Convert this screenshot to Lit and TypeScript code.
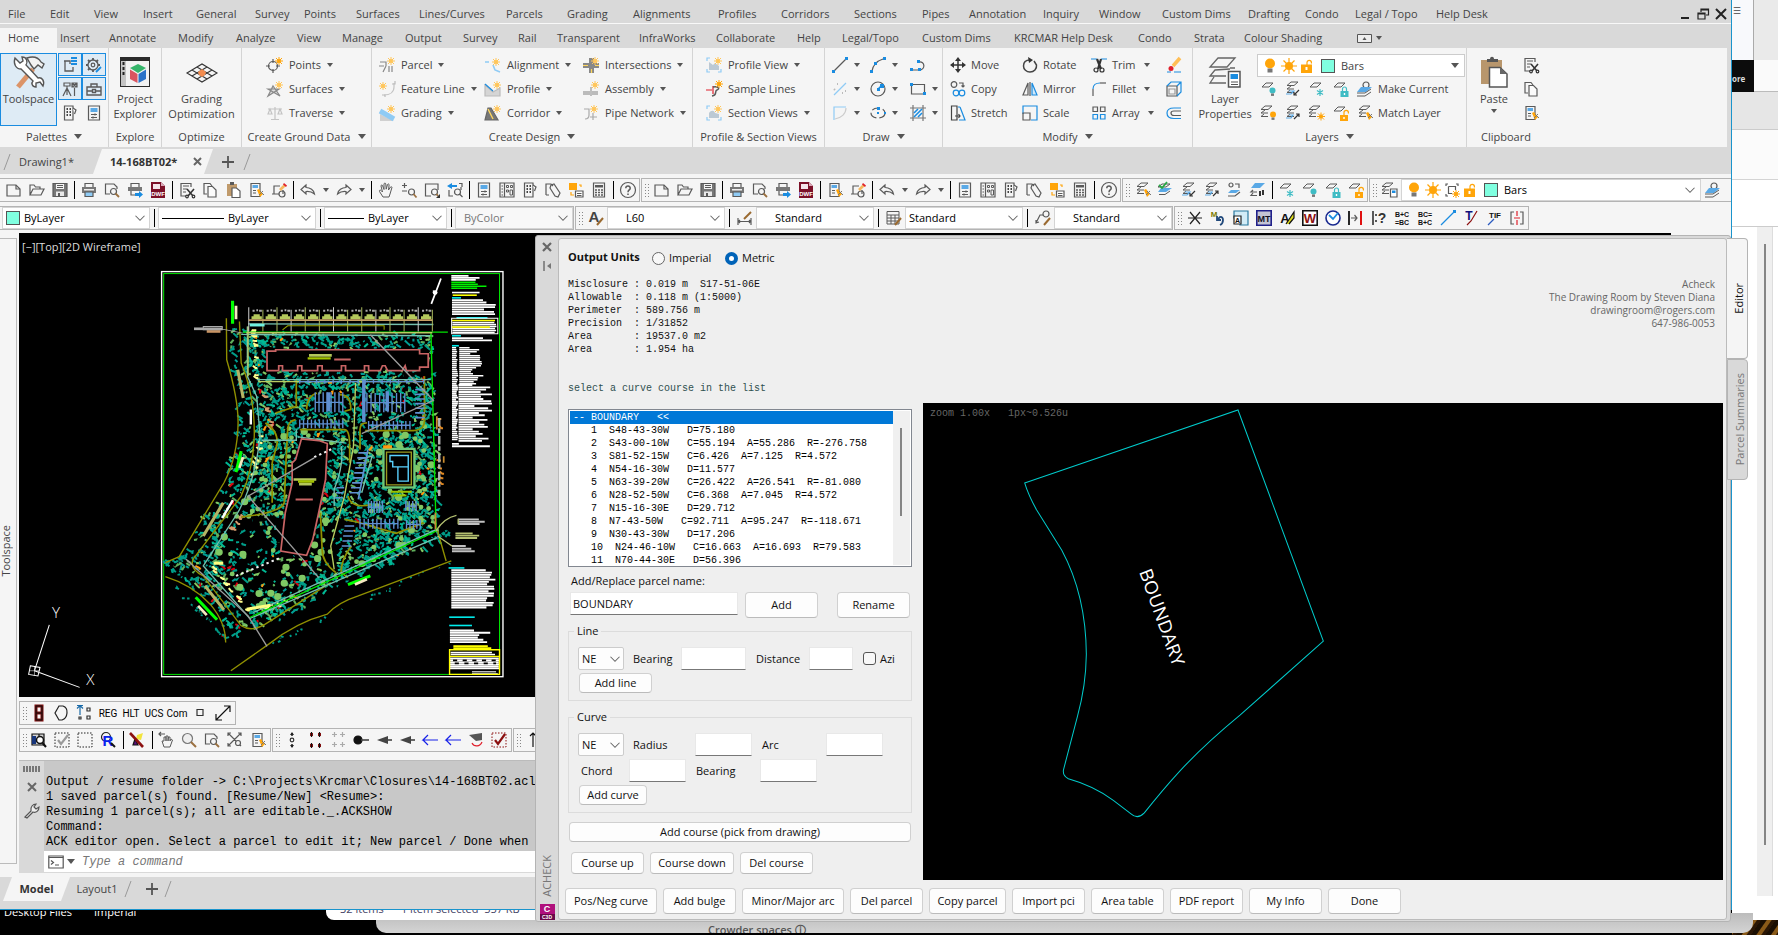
import { LitElement, html, css, svg, nothing, TemplateResult, SVGTemplateResult } from "lit";
import { customElement } from "lit/decorators.js";

const G = "#5a5a5a";
const B = "#1a8ce0";
const L = "#8fcbf5";
const O = "#ffa50a";
const R = "#e0202c";
const T = "#3fbcc4";

const p = (d: string, stroke = G, fill = "none", w = 1.2) =>
  svg`<path d=${d} stroke=${stroke} fill=${fill} stroke-width=${w}/>`;
const f = (d: string, fill = G) => svg`<path d=${d} fill=${fill}/>`;
const c = (x: number, y: number, r: number, stroke = G, fill = "none", w = 1.2) =>
  svg`<circle cx=${x} cy=${y} r=${r} stroke=${stroke} fill=${fill} stroke-width=${w}/>`;
const t = (x: number, y: number, s: string, size: number, fill: string) =>
  svg`<text x=${x} y=${y} font-size=${size} font-weight="700" text-anchor="middle" fill=${fill} font-family="Liberation Sans, sans-serif">${s}</text>`;

const star = (x: number, y: number, col = O) => svg`<g transform="translate(${x} ${y})">${[
  p("M0 -4V4M-4 0H4M-3 -3L3 3M3 -3L-3 3", col, "none", 1), c(0, 0, 2, "none", col)]}</g>`;
const pale = "#ffc65a";
const layers = (dx = 0) => [p(`M${4 + dx} 1H${11 + dx}L${7 + dx} 4.5H${dx}Z`, G, "none", 1), p(`M${4 + dx} 5L${dx} 8H${7 + dx}M${3 + dx} 9L${dx} 11.5H${7 + dx}`, G, "none", 1)];
const layer = [p("M5 2H12L8 6H1Z", G, "none", 1)];
const layersBlue = [p("M4 2H12L8 5H0Z", G, "none", 1), f("M3 6H14L8 10H0Z", "#5aa9e6"), p("M1 12.5H7L12 9", G, "none", 1)];
const bulb = (x: number, y: number, r: number, col: string) => [c(x, y, r, "none", col), f(`M${x - r / 2} ${y + r}h${r}v${r * 0.8}h${-r}Z`, "#777")];
const lock = (x: number, y: number, col: string, open = false) => [
  p(open ? `M${x + 3} ${y}v-2.5a2.2 2.2 0 0 1 4.4 0v1` : `M${x + 1} ${y}v-2a2 2 0 0 1 4 0v2`, col), f(`M${x - 1} ${y}h8v6h-8Z`, col), f(`M${x + 2.3} ${y + 2}h1.4v2h-1.4Z`, "#fff")];
const arrowUp = p("M9 14L14 9M14 12V9H11", "#333");
const arrowDn = p("M14 9L9 14M9 11V14H12", "#333");
const brush = [f("M9 8l2 -1 4 5-3 3Z", O), p("M11 13L15 9M12 9L16 13", "#777", "none", 1)];
const doc = p("M3 1.5H12V14.5H3Z");

const icons: Record<string, SVGTemplateResult | unknown[]> = {
  new: [p("M1 3H10L14 7V14H1Z"), p("M10 3V7H14")],
  open: [p("M1 13V3H5L6.5 5H11V7M1 13L4 7H15L12 13Z")],
  save: [p("M1 1.5H15V14.5H1Z", G, "#777"), f("M4 2H12V7H4Z", "#f5f5f5"), f("M4 9.5H12V14H4Z", "#e9e9e9"), f("M5 3H11V4H5ZM5 5H11V6H5ZM6 11H8V14H6Z")],
  print: [p("M4 5V1.5H12V5"), f("M1 5H15V11H1Z", "#777"), f("M3 7H13V8.5H3Z", "#eee"), p("M4 10H12V14.5H4Z", G, L)],
  preview: [p("M6 12H1.5V2H10L13 5V7"), c(9.5, 9.5, 3), p("M11.5 11.5L15 15", "#9a7040", "none", 1.8)],
  publish: [p("M4 5V1.5H12V5"), f("M1 5H15V9H1Z", "#777"), p("M4 9V13H8"), f("M8 11H12V9L16 12.5L12 16V14H8Z", B)],
  dwf: [f("M1 0H11L15 4V16H1Z", "#7c1028"), f("M3 2H10V7H3Z", "#f4e4ea"), f("M11 0V4H15Z", "#d9a8b8"), t(8, 14, "DWF", 6, "#fff")],
  cut: [p("M12 5V1.5H2V14H7M4 4H10M4 7H8M4 10H7"), p("M8 7L14 14M15 7L9 14", "#333", "none", 1.6), c(8, 14.5, 1.3, "#333"), c(14.5, 14.5, 1.3, "#333")],
  copy: [p("M5 12H2V1.5H8L10 4"), p("M6 4.5H10.5L14 8V15H6Z", G, "#fbfbfb")],
  paste: [f("M2 2H12V14H2Z", "#c09a6b"), f("M5 0H9V3H5Z"), p("M7 6H11.5L15 9V15.5H7Z", G, "#fff")],
  match: [doc, f("M4.5 3H10V6H4.5Z", "#5aa9e6"), p("M5 8.5H8M5 11H8"), brush],
  block: [p("M9 4H3V12H1M3 12H8M12 8V12"), c(11, 12, 3), p("M9 8L14 3", "#f5b860", "none", 2.6), f("M13 1L16 3.5L15 5L12 2.5Z", R)],
  undo: [p("M6 3L1 7.5L6 12V9.5C10 9 12 10 14.5 12C14 8 10 5.5 6 5.5Z")],
  redo: [p("M10 3L15 7.5L10 12V9.5C6 9 4 10 1.5 12C2 8 6 5.5 10 5.5Z")],
  pan: [p("M5 15L1.5 9.5C1 8 2.5 7.5 3.5 9L4.5 10L3 4C3 2.7 4.3 2.6 4.7 4L6 7.5L6 2C6.2 .8 7.600 .8 7.8 2L8.2 7.2L9.5 2.5C10 1.5 11.2 1.8 11.1 3L10.5 8L12.5 5C13.5 4.3 14.3 5 13.8 6L12 12L11 15Z", G, "none", 1)],
  zoompm: [p("M1 3.500H6M3.500 1V6M1 9H6"), c(10.5, 10, 3), p("M12.500 12L15.500 15.500", "#9a7040", "none", 1.8)],
  zoomwin: [p("M7 14H1.5V2H14V8"), c(10.5, 10, 3), p("M12.5 12L14 14", "#9a7040", "none", 1.8), f("M16 12V16H12Z", "#333")],
  zoomprev: [p("M2 8V14H6M14 8V5", G), f("M5 1L0 4L5 7V5H10V3H5Z", B), c(10.5, 10, 3), p("M12.5 12L15.5 15M12 1.5H15V5", G)],
  props: [p("M2.5 1H13.5V15H2.5Z"), f("M4.5 3H11.5V7H4.5Z", "#5aa9e6"), p("M5 9.5H11M5 12.5H11M9 8.5V10.5M7 11.5V13.5")],
  dc: [p("M1 1H15V15H1ZM5.5 1V15"), p("M2.5 4H4M2.5 7H4M2.5 10H4M2.5 13H4"), p("M7.5 3.5h2v2h-2ZM11.5 3.5h2v2h-2ZM7.5 8h2v2h-2ZM11 8h2.5v5H11Z", G, "none", 1)],
  toolp: [p("M2.5 1H11V15H2.5Z"), p("M4.500 4h1.5M7.500 4h1.5M4.500 7h1.5M7.500 7h1.5M4.500 10h1.5M7.500 10h1.5", "#444", "none", 1.8), p("M11 3L14 5L12.500 9", G, "#fff")],
  sheet: [p("M1 13V2H6L8 4M1 13H4"), p("M6 3L9 2L15 11L13 15L10 14L5 6Z")],
  markup: [f("M1 1H9V8H1Z", O), p("M11 3H13V5M3 10V13H6", O), p("M7.5 9H15V15H7.5ZM9 11.5H13.5M9 13.5H13.5", G, "#fff")],
  calc: [p("M2.5 1H13.5V15H2.5Z"), f("M4 3H12V5.5H4Z"), p("M4 8H12M4 10.5H12M4 13H12", G, "none", 1.6), p("M6.5 7V14M9.5 7V14", "#f5f5f5", "none", 1)],
  help: [c(8, 8, 7.500), p("M5.8 6.3C5.8 3.3 10.3 3.4 10.2 6.2C10.2 8 8 7.8 8 10.2M8 11.5V13", G, "none", 1.5)],
  layMatch: [layers(2), brush],
  layCheck: [layersBlue, p("M1 3L4 6L9 0", "#27a844", "none", 1.8)],
  layPrev: [layers(2), p("M4 10H9L6 13H1", "#5aa9e6"), arrowDn],
  layUp: [layers(2), p("M4 10H8L6 13H1", "#5aa9e6"), arrowUp],
  layIso: [c(4, 3, 2), p("M8 2H12V6"), f("M4 8H13L9 11H1Z", "#5aa9e6"), p("M1 14H8L13 10")],
  layWalk: [f("M5 1H15L10 6H1Z", "#5aa9e6"), p("M3 8L1 10H7M3 11L1 13.5H7"), f("M9 9h2v5H9ZM12 8h2v5h-2Z", "#333")],
  layFreeze: [layer, p("M11 8V15M8 9.5L14 13.5M14 9.5L8 13.5", T)],
  layOff: [layer, bulb(11.5, 9.5, 3, T)],
  layLock: [layer, lock(8.5, 10, T)],
  layUnlock: [layer, lock(8, 10, O, true)],
  layBulb: [layers(), bulb(12, 9.5, 3, O)],
  laySun: [layers(), star(12, 11.5)],
  layCur: [c(9, 4, 3), f("M4 6H15L9 11H0Z", "#5aa9e6"), p("M0 12H8L14 8M0 15H8L14 11", G, "none", 1)],
  layMgr: [layers(), p("M8.5 7H15V15H8.5Z", G, "#fff"), f("M10 8.5H13.5V11H10Z", B)],
  bulb: bulb(8, 5.5, 5, O), sun: [c(8, 8, 4, "none", O), p("M8 0V16M0 8H16M2.5 2.5L13.5 13.5M13.5 2.5L2.5 13.5", O)],
  vpsun: [p("M4 2H2V4M12 2H14V4M4 14H2V12M4.5 4.5H11.5V8M4.5 4.5V11.5H8"), star(12, 12)],
  unlock: [lock(4, 7, O, true), f("M1 6.5H12V15H1Z", O), f("M5.5 9H7.5V12H5.5Z", "#fff")],
  text: [t(6, 12, "A", 15, "#444"), p("M9 15L15 8", "#9a6a30", "none", 2)],
  dim: [p("M1 8V15M14 8V15M2 11.5H13M3 10L1.5 11.5L3 13M12 10L13.500 11.500L12 13"), p("M7 9L14 2", "#9a6a30", "none", 2)],
  tbl: [p("M1 1.5H13V14H1ZM1 5H13M1 8H13M1 11H13M5 5V14M9 5V14", G, "none", 1), p("M9 15L15 8", "#9a6a30", "none", 2)],
  mlead: [c(11, 4, 3), p("M1 13L5 5H8M1 10V13L4 12"), p("M9 15L15 8", "#9a6a30", "none", 2)],
  a1: [p("M1 8H15M3 2L13 14M13 2L3 14", "#222", "none", 1.2)],
  a2: [t(4, 7, "M", 8, "#7a7a00"), p("M7 10L10 7C14 6 14 13 10 15M7 6V10H11", "#224a7c", "none", 1.800)],
  a3: [p("M1 1H15V15H7V8H1Z", "#2a7aa0", "#d2ecf7"), p("M1 6H8V14H1Z", "#222", "#fff"), t(4.5, 13, "A", 7, "#111")],
  a4: [p("M.8 .8H15.2V15.2H.8Z", "#20208a", "#c4c4d4", 1.6), t(8, 12, "MT", 9, "#112")],
  a5: [t(6, 13, "A", 13, "#111"), p("M7 14L15 2V8L10 14", "#111", "#dddc20")],
  a6: [p("M.8 .8H15.2V15.2H.8Z", "#111", "#fff", 1.6), t(8, 13, "W", 13, "#8c1010")],
  a7: [c(8, 8, 7, "#1a2a90", "#fff", 1.6), p("M4 5L8 9L13 3", "#1a8ce0", "none", 1.8)],
  a8: [p("M1 1V15", "#111", "none", 1.8), p("M3 8H9M6.5 5L9 8L6.5 11"), p("M13 1V15", "#e01010", "none", 2)],
  a9: [p("M2 1V15M5 4V6M5 10V12", "#333", "none", 1.6), t(11, 13, "?", 14, "#333")],
  a10: [t(8, 7, "B+C", 7, "#111"), t(8, 15, "=BC", 7, "#111")],
  a11: [t(8, 7, "BC=", 7, "#111"), t(8, 15, "B+C", 7, "#111")],
  a12: [p("M1 15L15 1", B), f("M13 0H16V3H13Z", B)],
  a13: [t(6, 10, "T", 12, "#10107a"), p("M4 15L8 11L14 1", "#8c1010")],
  a14: [t(9, 8, "TIF", 8, "#111"), p("M2 15L8 9", "#2a5ac0")],
  a15: [p("M5 2H2V14H5M11 2H14V14H11"), p("M8 1V6M8 10V15M5 8H11", R)],
  move: [p("M8 2V14M2 8H14", "#333", "none", 1.5), f("M8 0L11 4H5ZM8 16L11 12H5ZM0 8L4 5V11ZM16 8L12 5V11Z", "#333")],
  copyobj: [c(4, 3.5, 2.8), p("M9 2H13V6M11.5 4.5L13 6L14.5 4.5"), c(6, 12, 2.8, B), c(12, 12, 2.8, B)],
  stretch: [p("M1.5 1H7V15H1.5ZM5 11H10M8.5 9L10 11L8.5 13", "#444"), p("M10 2L15 15H9M8 2H10", B)],
  rotate: [p("M8 3C3 3 1.5 6 1.5 9C1.5 12.5 4.5 15 8 15C12 15 15 12 14.5 8L12 4", "#444", "none", 1.5), f("M6 0L11 3L7 6Z", "#333")],
  mirror: [p("M6 2L1 14H6Z"), p("M8 1V15", "#333", "none", 1), p("M10 2L15 14H10Z", B, "#cfe8fb")],
  scale: [p("M1 9V1H15V15H9", B), p("M1 8H8V15H1Z", G)],
  trim: [p("M0 2H6M10 2H16", B, "none", 1.2), p("M6 2L10 12M10 2L7 12", "#333", "none", 2.2), c(5, 13, 2, "#333"), c(11, 13, 2, "#333")],
  fillet: [p("M2 15V8"), p("M2 8C2 4 5 2 9 2", B), p("M9 2H15")],
  array: [p("M2 2h4.5v4.5H2ZM9.5 2H14v4.5H9.5Z", G), p("M2 9.5h4.5V14H2ZM9.5 9.5H14V14H9.5Z", B)],
  erase: [p("M14 1L7 9", "#ffbe55", "none", 3.5), c(5, 11.500, 2.5, "none", R), p("M1 15H5M8 15H15", B)],
  explode: [p("M1 5H11V15H1Z", G), p("M3 8H9V13H3Z", "#999"), p("M1 5L5 1H15V11L11 15M15 1L11 5", B)],
  offset: [p("M15 3H8C3 3 1 5 1 8C1 11 3 13.5 8 13.5H15", B), p("M15 6H8C5.5 6 5 7 5 8C5 9.5 6 10.5 8 10.5H15", G)],
  line: [p("M2 14L14 2"), f("M0 13h3v3H0ZM13 0h3v3h-3Z", B)],
  pline: [p("M2 14C3 8 7 4 13 2", G, "none", 1.2), f("M0 13h3v3H0ZM13 0h3v3h-3ZM4 5h3v3H4Z", B)],
  arc: [p("M1 13H9C16 13 15 4 9 5"), f("M0 11h3v3H0ZM8 11h3v3H8ZM7 3h3v3H7Z", B)],
  hatchl: [p("M2 14L14 2", L), p("M2 8L3 9M10 12H11M5 3H6M13 10H14", "#bbb", "none", 2)],
  circle: [c(8, 8, 7), p("M8 8L12 4", B), f("M7 7h3v3H7ZM10 3h4v4h-4Z", B)],
  rect: [p("M1.5 3.5H14.5V13H1.5Z"), f("M0 2h3v3H0ZM13 11h3v3h-3Z", B)],
  arcpale: [p("M2 15V2H14", L, "none", 1.2), p("M3 14C9 13 14 9 14 3", "#ccc")],
  ellipse: [svg`<ellipse cx="8" cy="8" rx="7" ry="5" fill="none" stroke=${G} stroke-width="1.2" stroke-dasharray="8 3"/>`, f("M7 2h3v3H7ZM7 7h2v2H7ZM14 7h2v2h-2Z", B)],
  hatch: [p("M3 0V16M13 0V16M0 3H16M0 13H16", "#777"), p("M4 8L8 4M4 12L12 4M8 12L12 8", B, "none", 1.6)],
  points: [c(6, 9, 4.5), p("M6 2V6M6 12V16M-1 9H3M9 9H13"), star(12, 4)],
  surf: [p("M1 15L6 5L13 15L1 8H12Z", "#888", "#ddd"), star(12, 4, pale)],
  trav: [p("M8 2V14M4 14.5H12M1 4H15M3 4L1 9H5ZM13 4L11 9H15Z", "#c4c4c4")],
  parcel: [p("M1 5H7V9M0 9H5M7 9L4 15M10 9V15M13 9V15", "#888"), star(12, 4, pale)],
  fline: [p("M15 2V6C15 11 11 14 5 14", "#c4c4c4"), p("M13 3H16V0M3 14H6V16", "#bbb"), star(4, 5, pale)],
  grade: [f("M1 9L15 16H1Z", "#d0d0d0"), p("M1 6L15 14", L, "none", 5), star(12, 4, pale)],
  align: [p("M0 5H4M8 8L10 13L15 15", L, "none", 1.6), star(11, 5, pale)],
  profile: [p("M0 4L8 11L15 7V15H0Z", "#bbb", "#d5d5d5"), p("M0 3L8 10", B), star(12, 4, pale)],
  corridor: [p("M0 15L3 3H6L13 15Z", "#666", "#777"), p("M3 4L8 14", "#ffd75e", "none", 1.4), star(12, 4, pale)],
  inters: [f("M0 6H16V11H0ZM6 1H11V16H6Z", "#888"), p("M0 8.5H5M12 8.5H16M8.5 12V16", "#ffd75e"), star(12, 4, pale)],
  assem: [f("M0 10H7V14H0ZM9 10H15V14H9Z", "#bbb"), p("M8 6V15", "#999"), star(12, 4, pale)],
  pipe: [p("M1 4H6V10C6 14 3 14 2 14M10 8V15M7 12H14", "#aaa"), star(11, 4, pale)],
  pview: [p("M4 1H1V4M1 12V15H4M12 15H15V12", L), f("M3 5L7 8L9 6L13 9V13H3Z", "#bcc9d4"), star(12, 4, pale)],
  sample: [p("M0 9H6M7 5V13", R), p("M7 6C13 5 14 8 11 9C8 10 12 14 6 15", G, "none", 1.5), star(13, 3)],
  sview: [p("M4 1H1V4M1 12V15H4M12 15H15V12", L), f("M3 13V8C5 5 8 5 9 8L13 9V13Z", "#bcc9d4"), star(12, 4, pale)],
  tsA: [p("M2 4H8V7M3 4V14H11V10", G, "none", 1.3), f("M9 0h6v2H9ZM9 3h6v2H9ZM9 6h6v2H9Z", B)],
  tsB: [c(7, 8, 5, G, "none", 1.3), c(7, 8, 1.8), p("M7 1V3M7 13V15M0 8H2M12 8H14M2 3L4 5M12 3L10 5M2 13L4 11", G, "none", 1.8), p("M10 15L15 10", B, "none", 1.8)],
  tsC: [p("M2 2H8V5H2ZM5 5V14M5 7L1 15M5 7L9 15M10 2L15 6M15 2L10 6M10 2H15V6H10Z"), p("M12.5 7V15")],
  tsD: [p("M1 6H15V14H1ZM5 6V3H11V6M1 10H6M10 10H15M6.5 8.5H9.5V11.5H6.5Z", G, "none", 1.4)],
  bb: [p("M5 1H11V15H5ZM5 8H11", "#7a0e0e", "none", 3), p("M5 1H11V15H5ZM5 8H11", "#111", "none", 1)],
  hex: [p("M5 1L1 8L5 15H8C14 13 15 3 9 1Z", "#222")],
  grp: [p("M3 1V10M0 3.500L3 .500L6 3.500M0 .500H6", "#1a6aa8"), p("M10 3h3v3h-3ZM10 11h3v3h-3ZM2 12h2v2H2Z", "#333")],
  sq: [p("M5 4.5h6v6H5Z", "#333")],
  diag: [p("M1 15L15 1M9 1H15V7M1 9V15H7", "#111")],
  lens: [p("M1 2H13V13H1ZM1 2H8V6", "#111", "#d4d4d4"), f("M1 4H5V12H1Z", "#17357c"), c(9, 8, 3.5, "#111", "#fff", 1.5), p("M11.5 11L15 15", "#111", "none", 2)],
  chk: [svg`<rect x="1" y="1" width="14" height="14" fill="none" stroke="#222" stroke-dasharray="1.5 1.5"/>`, p("M4 8L7 12L14 3", "#999", "none", 2.2)],
  dash: [svg`<rect x="1" y="1" width="14" height="14" fill="none" stroke="#222" stroke-dasharray="1.5 1.5"/>`],
  rr: [c(6, 5, 4.5, "#222"), t(8, 14, "R", 15, "#0a22ee"), p("M11 11L15 15", "#111", "none", 2)],
  noflag: [p("M6 7L4 13H9Z", "#111", "#5a107a"), f("M8 3L14 1L12 8L7 7Z", "#f2e43c"), p("M1 1L14 15", "#8c1010", "none", 2.6)],
  hand2: [p("M3 0L1 2L3 4M1 2H7"), p("M6 15L4 9L6 9V5L8 5V9V4H10V9L10.5 5H12V9L13 7L14.5 8L12 15Z", G, "none", 1)],
  mag: [c(6.5, 6.5, 5, "#777", "#eee"), p("M10 10L15 15", "#9a7040", "none", 2)],
  ext: [p("M1 1L14 14M14 1L1 14M1 4V1H4M11 1H14V4M1 11V14H4"), c(11, 11, 2.5, G, "#f5f5f5")],
  v1: [p("M8 1V4M8 12V15", "#222", "none", 1.5), f("M8 0L10 3H6ZM8 16L10 13H6Z", "#222"), c(8, 8, 1.8, "#333")],
  v2: [p("M4.500 0V5M12.500 0V5M4.500 11V16M12.500 11V16", "#111"), f("M3 1h3v3H3ZM11 1h3v3h-3ZM3 12h3v3H3ZM11 12h3v3h-3Z", "#8c1010"), p("M4.500 1V4M12.500 1V4M4.500 12V15M12.500 12V15", "#111")],
  v3: [p("M4.5 0V5M12.5 0V5M4.5 10V15M12.5 10V15M2 2.5H7M10 2.5H15M2 12.5H7M10 12.5H15", "#aaa")],
  v4: [c(5, 8, 4, "#111", "#111"), p("M8 8H16", "#444", "none", 1.6)],
  v5: [f("M1 8L12 4V12Z", "#444"), p("M12 8H16", "#444", "none", 1.6)],
  v6: [p("M16 8H1L6 3M1 8L6 13", "#1822e8", "none", 1.2)],
  v7: [f("M1 3L14 1V8L8 9Z", "#555"), p("M4 11C6 15 12 15 14 10", R)],
  v8: [svg`<rect x="1" y="1" width="14" height="14" fill="none" stroke="#8c1010" stroke-dasharray="1.5 1.5"/>`, p("M4 8L7 12L14 2", "#8c1010", "none", 2.2)],
  up: [p("M8 15V1M5 4L8 1L11 4", "#111")],
  chev: [p("M2 5L8 11L14 5", "#666", "none", 1.400)],
  wrench: [p("M1 15L7 9C6 5 9 2 12 2L10 5L12 7L15 5C15 9 12 11 9 10L3 16Z", "#555", "#eee")],
  prompt: [p("M.8 2H15.2V14H.8Z", "#555", "#fff"), p("M.8 3.5H15.2M3 6.5L5.5 8.5L3 10.5M7 11H11", "#555")],
};

const bigIcons: Record<string, unknown> = {
  tools: [p("M5 31L20 13", "#dc9468", "none", 5), p("M14 2C20 0 25 1 28 6L31 8L29 12L25 9L21 13L18 9Z", "#555", "#f2f2f2", 1.4), p("M2 2L7 7L10 5L9 1C14 1 15 6 13 9L25 22C29 21 32 25 30 30L27 26L23 27L23 31C19 31 18 27 20 25L8 13C3 13 0 8 2 2Z", "#555", "#fff", 1.4)],
  explorer: [f("M1 1H31V31H1Z", "#2b2b2b"), f("M7 5H30V30H7Z", "#f2f2f2"), f("M2 5H7V30H2Z", "#c4c4c4"), p("M4.5 6V9M4.5 11V14M4.5 16V19", "#222", "none", 2), f("M19 8L27 12L19 17L11 12Z", "#35b56a"), f("M11 13.5L18.5 18V27L11 23Z", "#d95560"), f("M27 13.5L19.5 18V27L27 23Z", "#2a72c8")],
  grading: [p("M1 17L16 8L31 17L16 26ZM6 14L21 23M11 11L26 20M26 14L11 23M21 11L6 20", "#333", "none", 1.1), f("M12 16L16 13L20 16L19 19L16 21L13 19Z", "#f28c50")],
  layerp: [p("M9 2H26L18 11H1ZM26 12H21M21 13L6 14L1 20H17M5 21L1 27H17", "#666", "none", 1.3), p("M19.5 15.5H31V31H19.5Z", "#555", "#fff", 1.5), f("M21.5 18H29V23H21.5Z", B), p("M22 26H29M22 28.5H29", "#555")],
  paste: [f("M3 4H24V28H3Z", "#b8966c"), f("M9 3H12C12 0 16 0 16 3H20V6H9Z", "#555"), p("M11.5 11.5H22L29 18V31H11.5Z", "#555", "#fff", 1.5), f("M22 12V18H29Z", "#666")],
};

const ico = (name: string, cls = "i16") => html`<svg class=${cls} viewBox="0 0 16 16" aria-hidden="true">${icons[name]}</svg>`;
const big = (name: string) => html`<svg class="i32" viewBox="0 0 32 32" aria-hidden="true">${bigIcons[name]}</svg>`;

/* Small seeded generator so the site plan keeps the same planting on every render. */
function seeded(seed: number) {
  let s = seed;
  return () => ((s = (s * 16807) % 2147483647) / 2147483647);
}
type Pt = [number, number];
function inside(x: number, y: number, poly: Pt[]) {
  let hit = false;
  for (let i = 0, j = poly.length - 1; i < poly.length; j = i++) {
    const [xi, yi] = poly[i], [xj, yj] = poly[j];
    if (yi > y !== yj > y && x < ((xj - xi) * (y - yi)) / (yj - yi) + xi) hit = !hit;
  }
  return hit;
}
const box = (x0: number, y0: number, x1: number, y1: number): Pt[] => [[x0, y0], [x1, y0], [x1, y1], [x0, y1]];
const site: Pt[] = [[700, 310], [1255, 315], [1270, 905], [730, 1160], [590, 1010], [700, 820], [745, 680], [745, 470]];
const westRoad: Pt[] = [[657, 290], [745, 310], [760, 560], [745, 740], [590, 1010], [640, 1080], [700, 1150], [740, 1180], [660, 1240], [640, 1140], [480, 1010], [530, 985], [650, 760], [690, 640], [690, 520]];
const southStrip: Pt[] = [[730, 1130], [1268, 880], [1275, 935], [1000, 1060], [760, 1200], [700, 1180]];
const keepClear: Pt[][] = [box(770, 356, 1246, 426), [[870, 624], [956, 638], [895, 984], [810, 970]], box(1115, 660, 1202, 775)];
const paved: Pt[][] = [box(915, 485, 1000, 548), box(1062, 485, 1190, 552), box(870, 566, 1000, 600), box(1066, 570, 1200, 604), [[1035, 660], [1068, 660], [1040, 815], [1012, 815]], box(990, 880, 1030, 960), box(1045, 862, 1160, 905)];

function planting() {
  const rnd = seeded(4711);
  const lanes: Record<string, string> = {};
  const add = (col: string, d: string) => { lanes[col] = (lanes[col] || "") + d; };
  const greens = ["#009c88", "#009c88", "#009c94", "#00a08c", "#00a08c", "#00b894", "#5fae5c", "#80c864"];
  for (let i = 0; i < 6200; i++) {
    const x = 470 + rnd() * 830, y = 280 + rnd() * 970, k = rnd(), a = rnd() - 0.5, b = rnd() - 0.5;
    const hue = greens[Math.floor(rnd() * greens.length)];
    const inSite = inside(x, y, site), inRoad = inside(x, y, westRoad), inSouth = inside(x, y, southStrip);
    if (!inSite && !inSouth && !(inRoad && k < 0.6)) continue;
    if (keepClear.some((q) => inside(x, y, q))) continue;
    if (paved.some((q) => inside(x, y, q)) && k > 0.25) continue;
    if (y > 860 && x > 640 && x < 985 && inSite && !inSouth && k > 0.28) continue;
    let col = hue;
    if (k < 0.01) col = "#d80010";
    else if (k < 0.016) col = "#ff9a10";
    add(col, `M${x.toFixed(0)} ${y.toFixed(0)}l${(a * 26).toFixed(0)} ${(b * 24 + 1).toFixed(0)}l${(b * 12).toFixed(0)} ${(a * 10).toFixed(0)}`);
  }
  const rim: Pt[][] = [[[480, 1000], [545, 985]], [[780, 1245], [1310, 995]], [[480, 1040], [655, 1230]], [[1250, 930], [1310, 905]]];
  for (const [[x0, y0], [x1, y1]] of rim) for (let i = 0; i < 26; i++) {
    const q = rnd(), x = x0 + (x1 - x0) * q, y = y0 + (y1 - y0) * q + (rnd() - 0.5) * 14;
    add("#009c88", `M${x.toFixed(0)} ${y.toFixed(0)}l${(rnd() * 16 - 8).toFixed(0)} ${(rnd() * 9 - 4).toFixed(0)}`);
  }
  const spots: [string, number, Pt, Pt][] = [["#ffff90", 12, [725, 290], [735, 440]], ["#ffff90", 10, [600, 1000], [720, 1150]], ["#d29a6e", 9, [755, 480], [775, 590]], ["#d29a6e", 8, [660, 900], [700, 840]], ["#ffff90", 9, [720, 760], [748, 620]], ["#e08820", 7, [1262, 500], [1270, 880]], ["#ffff90", 8, [740, 1140], [830, 1110]]];
  for (const [col, n, [x0, y0], [x1, y1]] of spots) for (let i = 0; i < n; i++) {
    const q = rnd();
    add(col, `M${(x0 + (x1 - x0) * q + rnd() * 10).toFixed(0)} ${(y0 + (y1 - y0) * q).toFixed(0)}l8 ${(rnd() * 12 - 2).toFixed(0)}h5`);
  }
  let trees = "", large = "";
  for (let i = 0; i < 420; i++) {
    const x = 600 + rnd() * 660, y = 560 + rnd() * 580, k = rnd();
    if (!inside(x, y, site) || [...keepClear, ...paved].some((q) => inside(x, y, q))) continue;
    const west = y > 600 && x < 985, east = x > 1090 || y > 900;
    if (!west && !east && k > 0.2) continue;
    if (k > 0.5) continue;
    if (k > 0.3) large += `M${x.toFixed(0)} ${y.toFixed(0)}h.1`; else trees += `M${x.toFixed(0)} ${y.toFixed(0)}h.1`;
  }
  return [
    Object.entries(lanes).map(([col, d]) => svg`<path d=${d} stroke=${col} stroke-width="6" fill="none"/>`),
    svg`<path d=${trees} stroke="#80c864" stroke-width="14" stroke-linecap="round"/><path d=${large} stroke="#80c864" stroke-width="21" stroke-linecap="round"/>`,
  ];
}

function bars(x: number, y0: number, y1: number, step: number, min: number, max: number, col: string, seed: number) {
  const rnd = seeded(seed);
  let d = "";
  for (let y = y0; y <= y1; y += step) d += `M${x} ${y}h${(min + rnd() * (max - min)).toFixed(0)}`;
  return svg`<path d=${d} stroke=${col} stroke-width=${Math.min(step * 0.8, 6)} fill="none"/>`;
}

const stalls = (x: number, y: number, w: number, h: number, n = 10) => {
  let d = "";
  for (let i = 0; i <= n; i++) d += `M${(x + (w * i) / n).toFixed(0)} ${y}v${h}`;
  return svg`<path d=${d + `M${x} ${y + h / 2}h${w}`} stroke="#5f8fd0" stroke-width="4" fill="none"/>`;
};

const sitePlan = html`<svg class="plan" viewBox="55 9 1498 1395" preserveAspectRatio="none" role="img" aria-label="Site plan">
  <g fill="none" stroke-width="3">
    <rect x="469" y="125" width="991" height="1218" stroke="#fff" stroke-width="4"/>
    <rect x="475" y="131" width="975" height="1205" stroke="#00e400"/>
    ${planting()}
    <path d="M657 265L658 390Q692 510 691 580Q690 680 650 760L520 982L480 1000M695 275L700 400Q740 500 738 620Q735 720 700 800L560 990Q550 1020 590 1040L700 1190Q730 1210 770 1185L960 1060M480 1042Q560 1068 610 1125Q655 1180 655 1240M670 1325L780 1245Q860 1180 950 1155Q980 1120 1040 1100L1310 995M1270 905L1295 995" stroke="#8f8f00" stroke-width="4"/>
    <path d="M770 580Q805 600 805 640L790 700V820M858 570Q835 575 835 600L830 700L825 820Q815 850 700 863M860 450V530L800 550M890 540Q890 500 920 490M985 495Q1020 495 1018 540L1000 545M870 600H1000Q1015 600 1015 650V700M1045 660V600Q1045 580 1065 580M1060 603H1200Q1235 600 1232 570V440M1010 800Q1020 840 1080 825M930 850L935 960Q935 1000 975 1030M1000 870L1045 880L1150 912L1230 880M1020 950Q990 990 990 1030L1010 1045" stroke="#8f8f00" stroke-width="5"/>
    <path d="M720 282L1258 284M700 314L1255 318M718 290V440L745 500L755 620Q740 760 690 850L590 1010L725 1168L1268 925M745 450H1250M865 622L1000 640M760 632H860V600M735 1150L1268 900M990 650Q1000 700 970 780V830M1040 690L1080 680L1050 790" stroke="#74bfae" stroke-width="4"/>
    <path d="M705 307H1300M1251 310L1266 905L725 1165" stroke="#00e400" stroke-width="4"/>
    <path d="M715 309H1255M720 290V440M1032 460L1026 650L1000 800L960 950L970 1020M750 456H1225" stroke="#b8cc60" stroke-width="4"/>
    ${Array.from({ length: 14 }, (_, i) => svg`<path d=${`M${722 + i * 41} ${i % 2 ? 240 : 232}V305`} stroke=${i % 3 ? "#a4b45c" : "#c8c8c8"}/>${i < 13 ? svg`<path d=${`M${733 + i * 41} 243h6M${744 + i * 41} 241h5M${752 + i * 41} 243h8`} stroke="#aaa" stroke-width="6"/><path d=${`M${730 + i * 41} 264h30M${736 + i * 41} 258h18`} stroke="#b4c85c" stroke-width="9"/>` : nothing}`)}
    <path d="M722 271H1255" stroke="#c8a064" stroke-width="5"/><path d="M725 286H768" stroke="#6ff0e0" stroke-width="8"/><path d="M820 300L835 288H1115V300" stroke="#98a800"/>
    <path d="M775 364H800V360H1218V372H1243V412H1218V423H1180L1176 408L1168 423H1125L1118 408H1110L1104 423H1070V408H1058V423H1003V408H991V423H935V408H922V423H876V408H864V423H820V408H809V423H775Z" stroke="#c86464" stroke-width="5" fill="#000"/>
    <path d="M875 628L925 633L950 642L945 750L925 850L908 930L890 978L815 965L828 850L848 760V700L858 690Z" stroke="#c86464" stroke-width="5" fill="#000"/>
    <path d="M897 377H963M852 750H918M868 764H905" stroke="#b4c85c" stroke-width="8"/><path d="M893 386H960M865 756H912" stroke="#a4c400" stroke-width="7"/><path d="M970 389H1018M858 810H908" stroke="#c86464" stroke-width="6"/>
    ${[stalls(915, 488, 80, 60, 7), stalls(1065, 490, 110, 58, 9), stalls(870, 570, 125, 26, 11), stalls(1070, 574, 120, 26, 10), stalls(870, 450, 170, 12, 7), stalls(1060, 450, 170, 12, 7), stalls(1070, 815, 40, 36, 5), stalls(1045, 868, 110, 30, 9), stalls(1178, 815, 30, 30, 3), stalls(1180, 872, 40, 26, 4)]}
    <path d="M1205 480h28M1205 494h28M1205 508h28M1205 522h28M1205 536h28M1205 550h28M1205 564h28M1040 670h28M1037 685h28M1034 700h28M1031 715h28M1028 730h28M1025 745h28M1022 760h28M1019 775h28M1016 790h28M1068 660L1040 810M1000 890h28M998 905h28M996 920h28M994 935h28M992 950h28M975 790h22M977 775h22M973 805h22" stroke="#5f8fd0" stroke-width="5"/>
    <path d="M1056 450V578M1124 485V545M954 488V545" stroke="#5f8fd0" stroke-width="10"/>
    <rect x="1113" y="658" width="90" height="116" stroke="#6ec878" stroke-width="7" fill="#000"/><path d="M1122 668H1194V766H1122Z" stroke="#9a9a20" stroke-width="4"/><path d="M1132 678H1185V755H1155V712H1140V696H1132ZM1155 712H1185" stroke="#5ad2ff" stroke-width="4"/><path d="M1112 652H1138" stroke="#ff9a10" stroke-width="10"/><path d="M1135 787H1195M1142 798H1180" stroke="#98c400" stroke-width="6"/>
    <path d="M1075 315L1258 512L1050 612M912 685L720 800L925 1045M540 990L720 1160L775 1252" stroke="#9c9c9c" stroke-width="4"/>
    <path d="M912 683L970 655M685 1040L815 985" stroke="#eee" stroke-width="6" stroke-dasharray="7 9"/>
    <path d="M1252 222L1280 146M1262 192L1258 182" stroke="#fff" stroke-width="5"/><circle cx="1263" cy="188" r="7" fill="#fff"/>
    <path d="M563 297H645" stroke="#aaa" stroke-width="8"/><path d="M600 305H640" stroke="#c89464" stroke-width="8"/><path d="M590 290H645V300H590ZM645 298L705 310" stroke="#aaa"/>
    <path d="M675 213V282M700 665L685 728M568 1104L630 1172M1010 1066L1075 1040" stroke="#0f0" stroke-width="9"/>
    <path d="M685 228V268M705 683L695 715M575 1130L600 1158M1030 1066L1065 1050" stroke="#f4e8c0" stroke-width="8"/>
    <path d="M590 920L648 820M690 420L706 505M595 1070L650 1142" stroke="#b4b464" stroke-width="9"/>
    <path d="M645 866L676 812M728 540V585" stroke="#fff" stroke-width="7"/><path d="M620 1002H648M716 1140L785 1128" stroke="#ffff80" stroke-width="9"/>
    <path d="M1275 565V800" stroke="#b4b4b4" stroke-width="7" stroke-dasharray="26 5 14 9"/>
    <path d="M1268 560V600M1264 850V900M1288 680V700" stroke="#c88c30" stroke-width="5"/>
  </g>
  ${[
    bars(1310, 138, 150, 6, 50, 130, "#fff", 3), bars(1310, 157, 180, 6, 70, 110, "#00f000", 9), bars(1312, 188, 190, 6, 80, 110, "#fff", 5), bars(1314, 196, 198, 6, 70, 100, "#ff0", 5),
    bars(1312, 204, 205, 6, 26, 30, "#0ee", 5), bars(1312, 211, 258, 7, 90, 134, "#fff", 17), bars(1325, 264, 265, 6, 90, 95, "#0ee", 5), bars(1313, 278, 308, 6, 122, 130, "#fff", 5),
    bars(1312, 272, 273, 6, 125, 128, "#ff0", 5), bars(1312, 292, 293, 6, 110, 128, "#e8e800", 5), bars(1312, 318, 319, 6, 26, 28, "#0ee", 5), bars(1312, 325, 334, 7, 90, 130, "#fff", 5), bars(1312, 348, 349, 6, 20, 22, "#0ee", 5),
    bars(1312, 354, 634, 6, 12, 18, "#fff", 55), bars(1333, 354, 462, 6, 30, 76, "#fff", 35), bars(1331, 466, 634, 7, 40, 100, "#fff", 75), bars(1312, 643, 655, 7, 20, 134, "#fff", 6),
    bars(1330, 870, 884, 7, 60, 90, "#c0c0c0", 12), bars(1322, 912, 928, 7, 50, 72, "#b4c070", 14), bars(1312, 950, 970, 8, 40, 84, "#c0c0c0", 18),
    bars(1302, 1016, 1017, 6, 46, 48, "#0ee", 1), bars(1310, 1023, 1140, 7, 100, 132, "#fff", 88), bars(1304, 1164, 1165, 6, 74, 75, "#0ee", 4), bars(1304, 1189, 1190, 6, 66, 68, "#0ee", 4),
    bars(1306, 1204, 1240, 7, 70, 130, "#fff", 44), bars(1316, 1251, 1258, 6, 100, 112, "#ff0", 14), bars(1308, 1270, 1276, 6, 120, 138, "#fff", 4), bars(1306, 1288, 1318, 6, 142, 144, "#fff", 4), bars(1370, 1328, 1334, 6, 70, 80, "#bbb", 4),
  ]}
  <path d="M1311 265H1445V312H1311Z" fill="none" stroke="#fff" stroke-width="3"/>
  <path d="M1305 1262H1450V1336H1305ZM1305 1282H1450" fill="none" stroke="#ff0" stroke-width="4"/>
  <path d="M1315 1294H1440M1320 1303H1440" stroke="#000" stroke-width="5" stroke-dasharray="12 16"/>
  <path d="M1265 905Q1290 865 1325 858M1270 920L1312 950M1330 868V885" fill="none" stroke="#b4c070" stroke-width="4"/>
  <g fill="none" stroke="#fff" stroke-width="3"><path d="M100 1325L143 1187M100 1325L231 1375M88 1310L116 1315L110 1341L83 1336Z"/><path d="M100 1312V1340M85 1325H115" stroke-width="1.5"/></g>
  <text class="axis" x="151" y="1168">Y</text><text class="axis" x="250" y="1368">X</text>
</svg>`;

const menus = "File,Edit,View,Insert,General,Survey,Points,Surfaces,Lines/Curves,Parcels,Grading,Alignments,Profiles,Corridors,Sections,Pipes,Annotation,Inquiry,Window,Custom Dims,Drafting,Condo,Legal / Topo,Help Desk".split(",");
const tabs = "Home,Insert,Annotate,Modify,Analyze,View,Manage,Output,Survey,Rail,Transparent,InfraWorks,Collaborate,Help,Legal/Topo,Custom Dims,KRCMAR Help Desk,Condo,Strata,Colour Shading".split(",");
const courses = [
  "-- BOUNDARY   <<",
  "   1  S48-43-30W   D=75.180",
  "   2  S43-00-10W   C=55.194  A=55.286  R=-276.758",
  "   3  S81-52-15W   C=6.426  A=7.125  R=4.572",
  "   4  N54-16-30W   D=11.577",
  "   5  N63-39-20W   C=26.422  A=26.541  R=-81.080",
  "   6  N28-52-50W   C=6.368  A=7.045  R=4.572",
  "   7  N15-16-30E   D=29.712",
  "   8  N7-43-50W   C=92.711  A=95.247  R=-118.671",
  "   9  N30-43-30W   D=17.206",
  "   10  N24-46-10W   C=16.663  A=16.693  R=79.583",
  "   11  N70-44-30E   D=56.396",
];
const report = `Misclosure : 0.019 m  S17-51-06E
Allowable  : 0.118 m (1:5000)
Perimeter  : 589.756 m
Precision  : 1/31852
Area       : 19537.0 m2
Area       : 1.954 ha`;
const history = `Output / resume folder -> C:\\Projects\\Krcmar\\Closures\\14-168BT02.aclos
1 saved parcel(s) found. [Resume/New] <Resume>:
Resuming 1 parcel(s); all are editable._.ACKSHOW
Command:
ACK editor open. Select a parcel to edit it; New parcel / Done when fi`;

@customElement("app-root")
export class AppRoot extends LitElement {
  static styles = css`
    :host { display: block; font: 11px/16px "Open Sans", "Noto Sans", sans-serif; color: #444; }
    * { box-sizing: border-box; }
    button, input, select { font: inherit; color: inherit; margin: 0; }
    button { background: none; border: 0; padding: 0; white-space: nowrap; }
    svg { display: block; flex: none; overflow: visible; }
    .i16 { width: 16px; height: 16px; } .i12 { width: 12px; height: 12px; } .i32 { width: 32px; height: 32px; }
    .desktop { position: relative; height: 100vh; min-height: 880px; background: #000; overflow: hidden; }
    .caret { width: 0; height: 0; border: 3px solid transparent; border-top: 4px solid #555; border-bottom: 0; flex: none; }
    .caret.wide { border-width: 4px; border-bottom: 0; border-top-width: 5px; }

    .app { position: absolute; inset: 0 46px 25px 0; display: flex; flex-direction: column; background: #f5f5f5; border: solid #1a94cc; border-width: 0 1px 1px 0; overflow: hidden; }
    .menubar, .tabs { display: grid; background: #d9d9d9; padding-left: 8px; align-items: center; position: relative; flex: none; }
    .menubar { height: 24px; padding-top: 4px; border-bottom: 1px solid #f8f8f8; grid-template-columns: 42px 44px 49px 53px 59px 49px 52px 63px 87px 61px 66px 85px 63px 73px 68px 47px 74px 56px 63px 86px 57px 50px 81px 1fr auto; }
    .tabs { height: 24px; padding-top: 4px; grid-template-columns: 52px 49px 69px 58px 61px 45px 63px 58px 55px 39px 82px 77px 81px 45px 80px 92px 124px 56px 50px 113px auto 1fr; }
    .menubar button, .tabs button { text-align: left; height: 20px; }
    .tabs .on { background: #f5f5f5; margin: 0 3px 0 -8px; padding-left: 8px; }
    .winctl { display: flex; gap: 2px; padding-right: 2px; }
    .winctl button { width: 16px; display: grid; place-items: center; }
    .mini { display: flex; align-items: center; gap: 4px; }

    .ribbon { display: flex; height: 99px; margin-right: 4px; box-shadow: 4px 0 0 #d9d9d9; flex: none; }
    .panel { display: flex; flex-direction: column; border-right: 1px solid #d4d4d4; flex: none; }
    .panel:last-child { border: 0; }
    .pbody { display: flex; height: 78px; padding-top: 5px; }
    .ptitle { display: flex; align-items: center; justify-content: center; gap: 7px; height: 21px; white-space: nowrap; }
    .p1 { width: 109px; } .p2 { width: 53px; } .p3 { width: 80px; } .p4 { width: 130px; } .p5 { width: 321px; } .p6 { width: 132px; } .p7 { width: 118px; } .p8 { width: 250px; } .p9 { width: 274px; } .p10 { width: 78px; }
    .bigbtn { display: flex; flex-direction: column; align-items: center; gap: 3px; width: 100%; padding-top: 3px; line-height: 15px; height: 73px; }
    .bigbtn.pressed { width: 57px; flex: none; background: #deebf5; border: 1px solid #1a8ce0; padding-top: 2px; }
    .quad { display: grid; grid-template: repeat(3, 24px) / 24px 24px; margin-left: 1px; }
    .quad button { display: grid; place-items: center; border: 1px solid transparent; height: 23px; }
    .quad .sel { border-color: #1a8ce0; background: #deebf5; }
    .rows { display: grid; grid-auto-rows: 24px; grid-auto-flow: column; grid-template-rows: repeat(3, 24px); align-items: center; }
    .rows button { display: flex; align-items: center; gap: 6px; }
    .p4 .rows { padding-left: 25px; } .p5 .rows { padding-left: 7px; grid-template-columns: 106px 98px auto; }
    .p6 .rows { padding-left: 13px; } .p7 .rows { padding-left: 7px; grid-template-columns: 38px 40px auto; }
    .p8 .rows { padding-left: 7px; grid-template-columns: 72px 69px 75px auto; }
    .p8 .rows button { gap: 5px; } .p8 .rows .caret { margin-left: 3px; }
    .lay { display: flex; flex-direction: column; width: 208px; padding-top: 1px; }
    .p9 .bigbtn { width: 64px; } .p10 .bigbtn { width: 54px; }
    .laybox { display: flex; align-items: center; gap: 3px; height: 23px; border: 1px solid #ccc; background: #fff; padding: 0 5px 0 4px; }
    .laybox select, .combo select { appearance: none; border: 0; background: none; flex: 1; min-width: 0; padding: 0; outline: 0; }
    .swatch { width: 14px; height: 14px; background: #80ffe0; border: 1px solid #555; flex: none; }
    .laybox .swatch, .grow .swatch { margin: 0 3px 0 2px; }
    .layrow { display: flex; align-items: center; height: 24px; gap: 8px; padding-left: 4px; }
    .layrow .txt { display: flex; align-items: center; gap: 5px; }
    .clip { display: grid; grid-template-rows: repeat(3, 24px); align-items: center; padding-left: 2px; }

    .files, .layouts { display: flex; align-items: center; background: #d9d9d9; flex: none; }
    .files { height: 27px; padding: 2px 0 0 3px; }
    .slash { width: 16px; height: 16px; stroke: #999; stroke-width: 1; }
    .ftab { width: 74px; text-align: left; height: 25px; flex: none; }
    .ftab.on, .ltab.on { font-weight: 700; background: #f5f5f5; color: #333; }
    .ftab.on { width: 120px; clip-path: polygon(9px 0, 100% 0, calc(100% - 9px) 100%, 0 100%); display: flex; align-items: center; justify-content: space-between; padding: 0 11px 0 17px; }
    .plus { width: 30px; display: grid; place-items: center; }

    .bars { display: flex; flex-direction: column; gap: 4px; padding: 4px 0 3px; flex: none; }
    .bars > div { display: flex; gap: 1px; height: 24px; overflow: hidden; }
    .bar { display: flex; align-items: center; border: 1px solid #b4b4b4; height: 24px; flex: none; background: #f5f5f5; }
    .bar.open { border-left: 0; padding-left: 2px; }
    .bar.fill { flex: 1; border-right: 0; min-width: 0; overflow: hidden; }
    .bar button { width: 23px; height: 22px; display: grid; place-items: center; flex: none; }
    .bar button.dd { width: 13px; }
    .sep { width: 6px; height: 18px; flex: none; background: linear-gradient(#000, #000) center / 1px 100% no-repeat; }
    .bars .row2 .sep { width: 8px; }
    .grip { width: 8px; height: 15px; flex: none; background: radial-gradient(circle, #888 30%, transparent 40%) 2px 0 / 3px 3px; background-clip: content-box; padding: 0 1px; }
    .combo { display: flex; align-items: center; gap: 4px; height: 22px; background: #fff; border: 1px solid #d4d4d4; color: #000; padding: 0 3px; flex: none; }
    .combo .rule { height: 1px; background: #000; flex: none; }
    .combo.dim { color: #777; background: #f8f8f8; padding-left: 8px; }
    .combo.pad { padding-left: 18px; }
    .w118 { width: 118px; } .w123 { width: 123px; } .w148 { width: 148px; } .w158 { width: 158px; } .r35 { width: 36px; } .r60 { width: 62px; }
    .combo.grow { flex: 1; min-width: 0; max-width: 300px; padding: 0 4px; gap: 3px; }

    .main { flex: 1; display: grid; grid-template: minmax(0, 1fr) / 19px minmax(0, 1fr); min-height: 0; }
    .dock { margin: 5px 2px 9px 0; border: 1px solid #bbb; border-left: 0; display: flex; align-items: center; justify-content: center; }
    .dock .vert { margin-right: 4px; }
    .vert { writing-mode: vertical-rl; transform: rotate(180deg); white-space: nowrap; line-height: 16px; }
    .work { display: flex; flex-direction: column; min-width: 0; min-height: 0; }
    .view { flex: 1; background: #000; position: relative; min-height: 0; margin-right: 60px; }
    .plan { width: 516px; height: 100%; }
    .axis { fill: #fff; font: 300 44px "Open Sans", sans-serif; }
    .vlabel { position: absolute; left: 3px; top: 6px; color: #ddd; }
    .lower { display: flex; gap: 1px; padding-top: 4px; flex: none; }
    .lower + .lower { padding-top: 3px; }
    .lower .bar button { width: 22px; color: #000; font: 10px "Roboto", sans-serif; margin-right: 1px; }
    .cmd { display: grid; grid-template-columns: 25px minmax(0, 1fr); margin-top: 8px; border-top: 1px solid #bbb; background: #d9d9d9; height: 113px; flex: none; }
    .cmdl { display: flex; flex-direction: column; align-items: center; gap: 9px; padding-top: 5px; }
    .dots { width: 18px; height: 6px; background: repeating-linear-gradient(90deg, #777 0 2px, transparent 2px 3px); }
    .cmd pre { margin: 0; height: 90px; padding: 14px 2px 0; background: #c8c8c8; color: #000; font: 12px/15px "Liberation Mono", monospace; max-width: 491px; overflow: hidden; }
    .cmdin { display: flex; align-items: center; gap: 3px; background: #fff; height: 21px; padding-left: 4px; }
    .cmdin input { border: 0; outline: 0; flex: 1; font: italic 12px "Liberation Mono", monospace; padding: 0 4px; }
    .cmdin input::placeholder { color: #777; }
    .layouts { height: 32px; padding-bottom: 8px; padding-left: 3px; margin-top: 4px; }
    .ltab.on { width: 67px; clip-path: polygon(9px 0, 100% 0, calc(100% - 9px) 100%, 0 100%); }
    .ltab { width: 54px; height: 24px; }
    .layouts .plus { width: 24px; }

    .palette { position: absolute; inset: 235px 47px 13px 535px; display: grid; grid-template-columns: 22px minmax(0, 1fr); background: #d9d9d9; border: 1px solid #b4b4b4; border-radius: 3px; color: #111; }
    .pside { display: flex; flex-direction: column; align-items: center; padding: 5px 0 1px; color: #777; gap: 7px; }
    .pside .vert { margin-top: auto; color: #777; }
    .logo { display: grid; grid-template-rows: 10px 6px; width: 15px; background: #b0107c; color: #fff; text-align: center; font: 700 9px/10px "Liberation Sans", sans-serif; }
    .logo small { font-size: 5px; line-height: 6px; background: #6a0848; }
    .content { margin: 2px 3px 1px 0; background: #efefef; border: 1px solid #bbb; border-radius: 3px; display: grid; grid-template: auto minmax(0, 1fr) auto / 364px minmax(0, 1fr); padding-right: 3px; min-width: 0; }
    .head { padding: 10px 0 0 9px; height: 164px; }
    .units { display: flex; align-items: center; }
    .units b { font-size: 11px; width: 84px; padding-bottom: 2px; }
    .units label { display: flex; align-items: center; gap: 4px; width: 73px; }
    .units input { appearance: none; width: 13px; height: 13px; border: 1px solid #666; border-radius: 50%; background: #f8f8f8; }
    .units input:checked { border: 4px solid #0063b8; background: #fff; }
    .mono { font: 10px/13px "Liberation Mono", monospace; margin: 0; }
    .units + .mono { margin-top: 11px; }
    .hint { margin-top: 26px; color: #2f4f4f; }
    .credit { text-align: right; color: #666; font: 10px/13px "Open Sans", sans-serif; padding: 39px 8px 0 0; }
    .form { padding: 6px 11px 0 9px; }
    .list { height: 158px; border: 1px solid #828790; background: #fff; display: grid; grid-template-columns: minmax(0, 1fr) 17px; padding: 1px; }
    .list ol { margin: 0; padding: 0; list-style: none; overflow: hidden; height: 154px; }
    .list li { white-space: pre; padding-left: 3px; height: 13px; color: #000; }
    .list li.cur { background: #0078d7; color: #fff; }
    .track { background: #f0f0f0; padding: 17px 7px; }
    .thumb { height: 88px; width: 2px; background: #858585; }
    .lbl { display: block; margin: 6px 0 3px 3px; }
    .nm { display: flex; padding-left: 2px; height: 27px; }
    .fld { background: #fff; border: 1px solid #e8e8e8; border-bottom-color: #777; height: 23px; padding: 0 2px; outline: 0; min-width: 0; }
    .nm .fld { width: 168px; margin-right: 7px; }
    .btn { background: #fdfdfd; border: 1px solid #d0d0d0; border-bottom-color: #bbb; border-radius: 4px; height: 26px; width: 73px; color: #111; flex: none; }
    .nm .btn + .btn { margin-left: 19px; }
    fieldset { border: 1px solid #dcdcdc; margin: 4px 0 0; padding: 8px 9px 0; min-width: 0; height: 78px; }
    fieldset + fieldset { margin-top: 8px; height: 104px; }
    legend { padding: 0 3px; margin-left: -4px; line-height: 16px; }
    .fr { display: flex; align-items: center; height: 23px; margin-bottom: 3px; }
    .drop { width: 46px; height: 23px; display: flex; align-items: center; background: #fdfdfd; border: 1px solid #ccc; border-radius: 2px; margin-right: 9px; padding: 0 2px 0 3px; flex: none; }
    .drop select { appearance: none; border: 0; background: none; width: 27px; padding: 0; }
    .fr .w48 { width: 48px; } .fr .w53 { width: 53px; } .fr .w62 { width: 62px; } .fr .w64 { width: 64px; }
    .fr .fld { flex: none; } .fr .m10 { margin-right: 10px; }
    .f44 { width: 44px; } .f57 { width: 57px; } .f65 { width: 65px; }
    .chk { display: flex; align-items: center; gap: 4px; }
    .chk input { appearance: none; width: 13px; height: 13px; border: 1px solid #555; border-radius: 3px; background: #f8f8f8; }
    .indent { padding-left: 3px; }
    .btn.small { height: 20px; line-height: 14px; margin-left: 1px; } .btn.w68 { width: 68px; }
    .btn.full { width: 342px; height: 20px; margin: 9px 0 10px 1px; display: block; line-height: 14px; }
    .trio { display: flex; gap: 6px; padding-left: 3px; } .trio .btn { height: 22px; } .btn.w84 { width: 84px; }
    .canvas { background: #000; min-width: 0; min-height: 0; position: relative; overflow: hidden; }
    .canvas svg { width: 800px; height: 477px; }
    .canvas .mono { position: absolute; left: 7px; top: 4px; color: #666; white-space: pre; }
    .pname { fill: #fff; font: 54px "Open Sans", sans-serif; text-anchor: middle; }
    .foot { grid-column: 1 / -1; display: flex; gap: 6px; padding: 8px 5px 5px 6px; }
    .btn.w92 { width: 92px; } .btn.w102 { width: 102px; } .btn.w77 { width: 77px; }
    .ptab { position: absolute; left: 100%; width: 21px; height: 121px; border: 1px solid #b4b4b4; border-radius: 0 4px 4px 0; display: flex; align-items: center; justify-content: center; margin-left: -3px; padding-left: 4px; }
    .ptab.t1 { top: 2px; background: #f5f5f5; border-left: 0; } .ptab.t2 { top: 123px; background: #d9d9d9; color: #777; }

    .behind { position: absolute; overflow: hidden; white-space: nowrap; }
    .side { top: 0; right: 0; width: 46px; height: 921px; background: #fff; display: flex; flex-direction: column; }
    .s1 { height: 60px; display: grid; grid-template-columns: 22px 1fr; background: #eaeaea; }
    .s1 i { background: #f8f9fc; border-right: 1px solid #aaa; font-style: normal; padding: 3px 0 0 1px; font-size: 9px; }
    .s2 { display: grid; grid-template-columns: 22px 1fr; height: 32px; background: #fafafa; border-bottom: 1px solid #bbb; } .s2 span { background: #0c0c0c; color: #ddd; font: 700 8px/38px "Open Sans", sans-serif; }
    .s3 { height: 38px; background: #e6e6e6; border-bottom: 1px solid #ccc; } .s4 { height: 50px; background: #fbfbfb; border-bottom: 1px solid #d4d4d4; } .s5 { height: 47px; border-bottom: 1px solid #ccc; }
    .s6 { flex: 1; margin: 0 5px 25px 25px; background: #efefef; border-right: 1px solid #ddd; padding: 17px 7px 51px; } .s6 div { width: 2px; height: 100%; background: #858585; }
    .status { left: 326px; width: 320px; bottom: 15px; height: 12px; background: #fff; border-radius: 0 0 8px 8px; color: #446; line-height: 2px; padding-left: 14px; white-space: pre; }
    .lowwin { left: 376px; right: 25px; bottom: 2px; height: 20px; background: linear-gradient(#bcbcbc, #d4d4d4); border-radius: 0 0 10px 10px; padding-left: 332px; line-height: 34px; color: #555; font-weight: 600; }
    .desk { left: 4px; bottom: 12px; height: 12px; line-height: 2px; color: #fff; display: flex; gap: 22px; }
    .rug { right: 0; bottom: 0; width: 46px; height: 15px; background: repeating-linear-gradient(125deg, #1a0e02 0 4px, #8a5a18 5px 8px, #2a1604 9px 12px); }
  `;

  private drop(label: string, caret = true) { return html`<span>${label}</span>${caret ? html`<i class="caret"></i>` : nothing}`; }
  private row(icon: string, label: string, caret = true) { return html`<button>${ico(icon)}${this.drop(label, caret)}</button>`; }
  private panel(cls: string, title: string, body: TemplateResult, caret = false) {
    return html`<section class="panel ${cls}"><div class="pbody">${body}</div><div class="ptitle">${title}${caret ? html`<i class="caret wide"></i>` : nothing}</div></section>`;
  }
  private tools(list: string) {
    return list.split(" ").map((n) => n === "|" ? html`<i class="sep"></i>` : n === ":" ? html`<i class="grip"></i>` : n === "v" ? html`<button class="dd" aria-label="More"><i class="caret"></i></button>` : html`<button aria-label=${n}>${n.startsWith("'") ? n.slice(1) : ico(n)}</button>`);
  }
  private combo(label: string, value: string, cls: string, lead: unknown = nothing) {
    return html`<label class="combo ${cls}">${lead}<select aria-label=${label}><option>${value}</option></select>${ico("chev", "i12")}</label>`;
  }
  private ne(label: string) { return html`<label class="drop"><select aria-label=${label}><option>NE</option></select>${ico("chev", "i12")}</label>`; }
  private slash() { return html`<svg class="slash" viewBox="0 0 16 16"><path d="M1 16L7 0" fill="none"/></svg>`; }
  private plus(label: string) { return html`<button class="plus" aria-label=${label}><svg class="i12" viewBox="0 0 12 12">${p("M6 0V12M0 6H12", "#555", "none", 1.8)}</svg></button>`; }

  private ribbon() {
    return html`<div class="ribbon">
      ${this.panel("p1", "Palettes", html`<button class="bigbtn pressed">${big("tools")}<span>Toolspace</span></button>
        <div class="quad">${["tsA", "tsB", "tsC", "tsD", "toolp", "props"].map((n, i) => html`<button class=${i < 4 ? "sel" : ""} aria-label=${n}>${ico(n)}</button>`)}</div>`, true)}
      ${this.panel("p2", "Explore", html`<button class="bigbtn">${big("explorer")}<span>Project<br>Explorer</span></button>`)}
      ${this.panel("p3", "Optimize", html`<button class="bigbtn">${big("grading")}<span>Grading<br>Optimization</span></button>`)}
      ${this.panel("p4", "Create Ground Data", html`<div class="rows">${this.row("points", "Points")}${this.row("surf", "Surfaces")}${this.row("trav", "Traverse")}</div>`, true)}
      ${this.panel("p5", "Create Design", html`<div class="rows">${[["parcel", "Parcel"], ["fline", "Feature Line"], ["grade", "Grading"], ["align", "Alignment"], ["profile", "Profile"], ["corridor", "Corridor"], ["inters", "Intersections"], ["assem", "Assembly"], ["pipe", "Pipe Network"]].map(([a, b]) => this.row(a, b))}</div>`, true)}
      ${this.panel("p6", "Profile & Section Views", html`<div class="rows">${this.row("pview", "Profile View")}${this.row("sample", "Sample Lines", false)}${this.row("sview", "Section Views")}</div>`)}
      ${this.panel("p7", "Draw", html`<div class="rows">${["line", "hatchl", "arcpale", "pline", "circle", "ellipse", "arc", "rect", "hatch"].map((n) => html`<button aria-label=${n}>${ico(n)}${n === "arc" ? nothing : html`<i class="caret"></i>`}</button>`)}</div>`, true)}
      ${this.panel("p8", "Modify", html`<div class="rows">
        ${this.row("move", "Move", false)}${this.row("copyobj", "Copy", false)}${this.row("stretch", "Stretch", false)}
        ${this.row("rotate", "Rotate", false)}${this.row("mirror", "Mirror", false)}${this.row("scale", "Scale", false)}
        ${this.row("trim", "Trim")}${this.row("fillet", "Fillet")}${this.row("array", "Array")}
        ${["erase", "explode", "offset"].map((n) => html`<button aria-label=${n}>${ico(n)}</button>`)}</div>`, true)}
      ${this.panel("p9", "Layers", html`<button class="bigbtn">${big("layerp")}<span>Layer<br>Properties</span></button>
        <div class="lay"><label class="laybox">${ico("bulb")}${ico("sun")}${ico("unlock")}<i class="swatch"></i><select aria-label="Layer"><option>Bars</option></select><i class="caret wide"></i></label>
        <div class="layrow">${["layOff", "layPrev", "layFreeze", "layLock"].map((n) => html`<button aria-label=${n}>${ico(n)}</button>`)}<button class="txt">${ico("layCur")}Make Current</button></div>
        <div class="layrow">${["layBulb", "layUp", "laySun", "layUnlock"].map((n) => html`<button aria-label=${n}>${ico(n)}</button>`)}<button class="txt">${ico("layMatch")}Match Layer</button></div></div>`, true)}
      ${this.panel("p10", "Clipboard", html`<button class="bigbtn">${big("paste")}<span>Paste</span><i class="caret"></i></button>
        <div class="clip">${["cut", "copy", "match"].map((n) => html`<button aria-label=${n}>${ico(n)}</button>`)}</div>`)}
    </div>`;
  }

  private palette() {
    return html`<section class="palette" aria-label="ACHECK">
      <div class="pside"><svg class="i12" viewBox="0 0 12 12">${p("M2 2L10 10M10 2L2 10", "#666", "none", 2.2)}</svg><svg class="i12" viewBox="0 0 12 12">${p("M3 1V11", "#777", "none", 1.6)}${f("M10 3L6 6L10 9Z", "#777")}</svg>
        <span class="vert">ACHECK</span><div class="logo">C<small>C3D</small></div></div>
      <div class="content">
        <div class="head">
          <div class="units"><b>Output Units</b><label><input type="radio" name="u">Imperial</label><label><input type="radio" name="u" checked>Metric</label></div>
          <pre class="mono">${report}</pre><div class="mono hint">select a curve course in the list</div>
        </div>
        <div class="credit">Acheck<br>The Drawing Room by Steven Diana<br>drawingroom@rogers.com<br>647-986-0053</div>
        <div class="form">
          <div class="list"><ol class="mono">${courses.map((s, i) => html`<li class=${i ? "" : "cur"}>${s}</li>`)}</ol><div class="track"><div class="thumb"></div></div></div>
          <label class="lbl" for="pn">Add/Replace parcel name:</label>
          <div class="nm"><input id="pn" class="fld" value="BOUNDARY"><button class="btn">Add</button><button class="btn">Rename</button></div>
          <fieldset><legend>Line</legend>
            <div class="fr">${this.ne("Line quadrant")}<label class="w48" for="lb">Bearing</label><input id="lb" class="fld f65 m10"><label class="w53" for="ld">Distance</label><input id="ld" class="fld f44 m10"><label class="chk"><input type="checkbox">Azi</label></div>
            <button class="btn small">Add line</button></fieldset>
          <fieldset><legend>Curve</legend>
            <div class="fr">${this.ne("Curve quadrant")}<label class="w62" for="cr">Radius</label><input id="cr" class="fld f57 m10"><label class="w64" for="ca">Arc</label><input id="ca" class="fld f57"></div>
            <div class="fr indent"><label class="w48" for="cc">Chord</label><input id="cc" class="fld f57 m10"><label class="w64" for="cb">Bearing</label><input id="cb" class="fld f57"></div>
            <button class="btn small w68">Add curve</button></fieldset>
          <button class="btn full">Add course (pick from drawing)</button>
          <div class="trio"><button class="btn">Course up</button><button class="btn w84">Course down</button><button class="btn">Del course</button></div>
        </div>
        <div class="canvas"><svg viewBox="69 37 2400 1372" preserveAspectRatio="none" role="img" aria-label="Parcel preview">
            <path d="M374 267L1014 57L1270 722L1020 935Q915 1018 840 1095Q790 1147 733 1216Q713 1236 693 1219L640 1180Q580 1138 505 1118Q486 1108 491 1090L532 940Q558 850 559 760Q558 590 485 460L410 345Q385 302 374 267Z" fill="none" stroke="#00cccc" stroke-width="3"/>
            <text class="pname" transform="translate(768 660) rotate(69.7)">BOUNDARY</text></svg>
          <span class="mono">zoom 1.00x   1px~0.526u</span></div>
        <div class="foot">${[["Pos/Neg curve", "w92"], ["Add bulge", ""], ["Minor/Major arc", "w102"], ["Del parcel", ""], ["Copy parcel", "w77"], ["Import pci", ""], ["Area table", ""], ["PDF report", ""], ["My Info", ""], ["Done", ""]].map(([a, w]) => html`<button class="btn ${w}">${a}</button>`)}</div>
      </div>
      <button class="ptab t1"><span class="vert">Editor</span></button><button class="ptab t2"><span class="vert">Parcel Summaries</span></button>
    </section>`;
  }

  render() {
    const std = "new open save | print preview publish dwf |";
    const pal = "props dc toolp sheet markup calc | help";
    return html`<main class="desktop">
      <div class="behind side"><div class="s1"><i>☰</i></div><div class="s2"><span>ore</span></div><div class="s3"></div><div class="s4"></div><div class="s5"></div><div class="s6"><div></div></div></div>
      <div class="behind rug"></div><div class="behind lowwin">Crowder spaces ⓘ</div><div class="behind status">32 items      1 item selected  557 KB</div><div class="behind desk"><span>Desktop Files</span><span>Imperial</span></div>
      <div class="app">
        <nav class="menubar">${menus.map((m) => html`<button>${m}</button>`)}<div class="winctl">
          <button aria-label="Minimize"><svg class="i12" viewBox="0 0 12 12">${p("M2 10H10", "#222", "none", 2)}</svg></button>
          <button aria-label="Restore"><svg class="i12" viewBox="0 0 12 12">${p("M4 4V1H11.5V7H9M1 5H8V11H1ZM1 6H8M4 2H11", "#222", "none", 1.2)}</svg></button>
          <button aria-label="Close"><svg class="i12" viewBox="0 0 12 12">${p("M1 1L11 11M11 1L1 11", "#222", "none", 2)}</svg></button></div></nav>
        <nav class="tabs">${tabs.map((m, i) => html`<button class=${i ? "" : "on"}>${m}</button>`)}<button class="mini" aria-label="Ribbon display"><svg width="15" height="9" viewBox="0 0 15 9">${p("M.5 .5H14.5V8.5H.5Z", "#555", "#eee", 1)}${f("M7.5 3L9.5 6H5.5Z")}</svg><i class="caret"></i></button></nav>
        ${this.ribbon()}
        <div class="files">${this.slash()}<button class="ftab">Drawing1*</button><button class="ftab on">14-168BT02*<svg width="9" height="9" viewBox="0 0 9 9">${p("M1 1L8 8M8 1L1 8", "#666", "none", 2)}</svg></button>${this.plus("New drawing")}${this.slash()}</div>
        <div class="bars">
          <div><div class="bar open">${this.tools(`${std} cut copy paste match block | undo v redo v | pan zoompm zoomwin zoomprev | ${pal}`)}</div>
            <div class="bar">${this.tools(`: ${std} match block | undo v redo v | ${pal}`)}</div>
            <div class="bar">${this.tools(": layMatch layCheck layPrev layUp layIso layWalk | layFreeze layOff layLock layUnlock")}</div>
            <div class="bar fill">${this.tools(": layMgr")}${this.combo("Layer control", "Bars", "grow", html`${ico("bulb")}${ico("sun")}${ico("vpsun")}${ico("unlock")}<i class="swatch"></i>`)}${this.tools("layCur")}</div></div>
          <div class="row2"><div class="bar open">${this.combo("Color", "ByLayer", "w148", html`<i class="swatch"></i>`)}<i class="sep"></i>${this.combo("Linetype", "ByLayer", "w158", html`<i class="rule r60"></i>`)}<i class="sep"></i>${this.combo("Lineweight", "ByLayer", "w123", html`<i class="rule r35"></i>`)}<i class="sep"></i>${this.combo("Plot style", "ByColor", "w118 dim")}</div>
            <div class="bar">${this.tools(": text")}${this.combo("Text style", "L60", "w118 pad")}<i class="sep"></i>${this.tools("dim")}${this.combo("Dimension style", "Standard", "w118 pad")}<i class="sep"></i>${this.tools("tbl")}${this.combo("Table style", "Standard", "w118")}<i class="sep"></i>${this.tools("mlead")}${this.combo("Multileader style", "Standard", "w118 pad")}</div>
            <div class="bar">${this.tools(": a1 a2 a3 a4 a5 a6 a7 a8 a9 a10 a11 a12 a13 a14 a15")}</div></div>
        </div>
        <div class="main"><aside class="dock"><span class="vert">Toolspace</span></aside>
          <div class="work"><div class="view">${sitePlan}<span class="vlabel">[−][Top][2D Wireframe]</span></div>
            <div class="lower"><div class="bar">${this.tools(": bb hex grp 'REG 'HLT 'UCS 'Com sq diag")}</div></div>
            <div class="lower"><div class="bar">${this.tools(": lens chk dash rr | noflag | hand2 mag preview ext match")}</div><div class="bar">${this.tools(": v1 v2 v3 v4 v5 v5 v6 v6 v7 v8")}</div><div class="bar fill">${this.tools(": up")}</div></div>
            <div class="cmd"><div class="cmdl"><i class="dots"></i><svg class="i12" viewBox="0 0 12 12">${p("M2 2L10 10M10 2L2 10", "#666", "none", 2)}</svg>${ico("wrench")}</div>
              <div><pre>${history}</pre><div class="cmdin">${ico("prompt")}<i class="caret wide"></i><input aria-label="Command" placeholder="Type a command"></div></div></div>
          </div></div>
        <div class="layouts"><button class="ltab on">Model</button><button class="ltab">Layout1</button>${this.slash()}${this.plus("New layout")}${this.slash()}</div>
      </div>
      ${this.palette()}
    </main>`;
  }
}
